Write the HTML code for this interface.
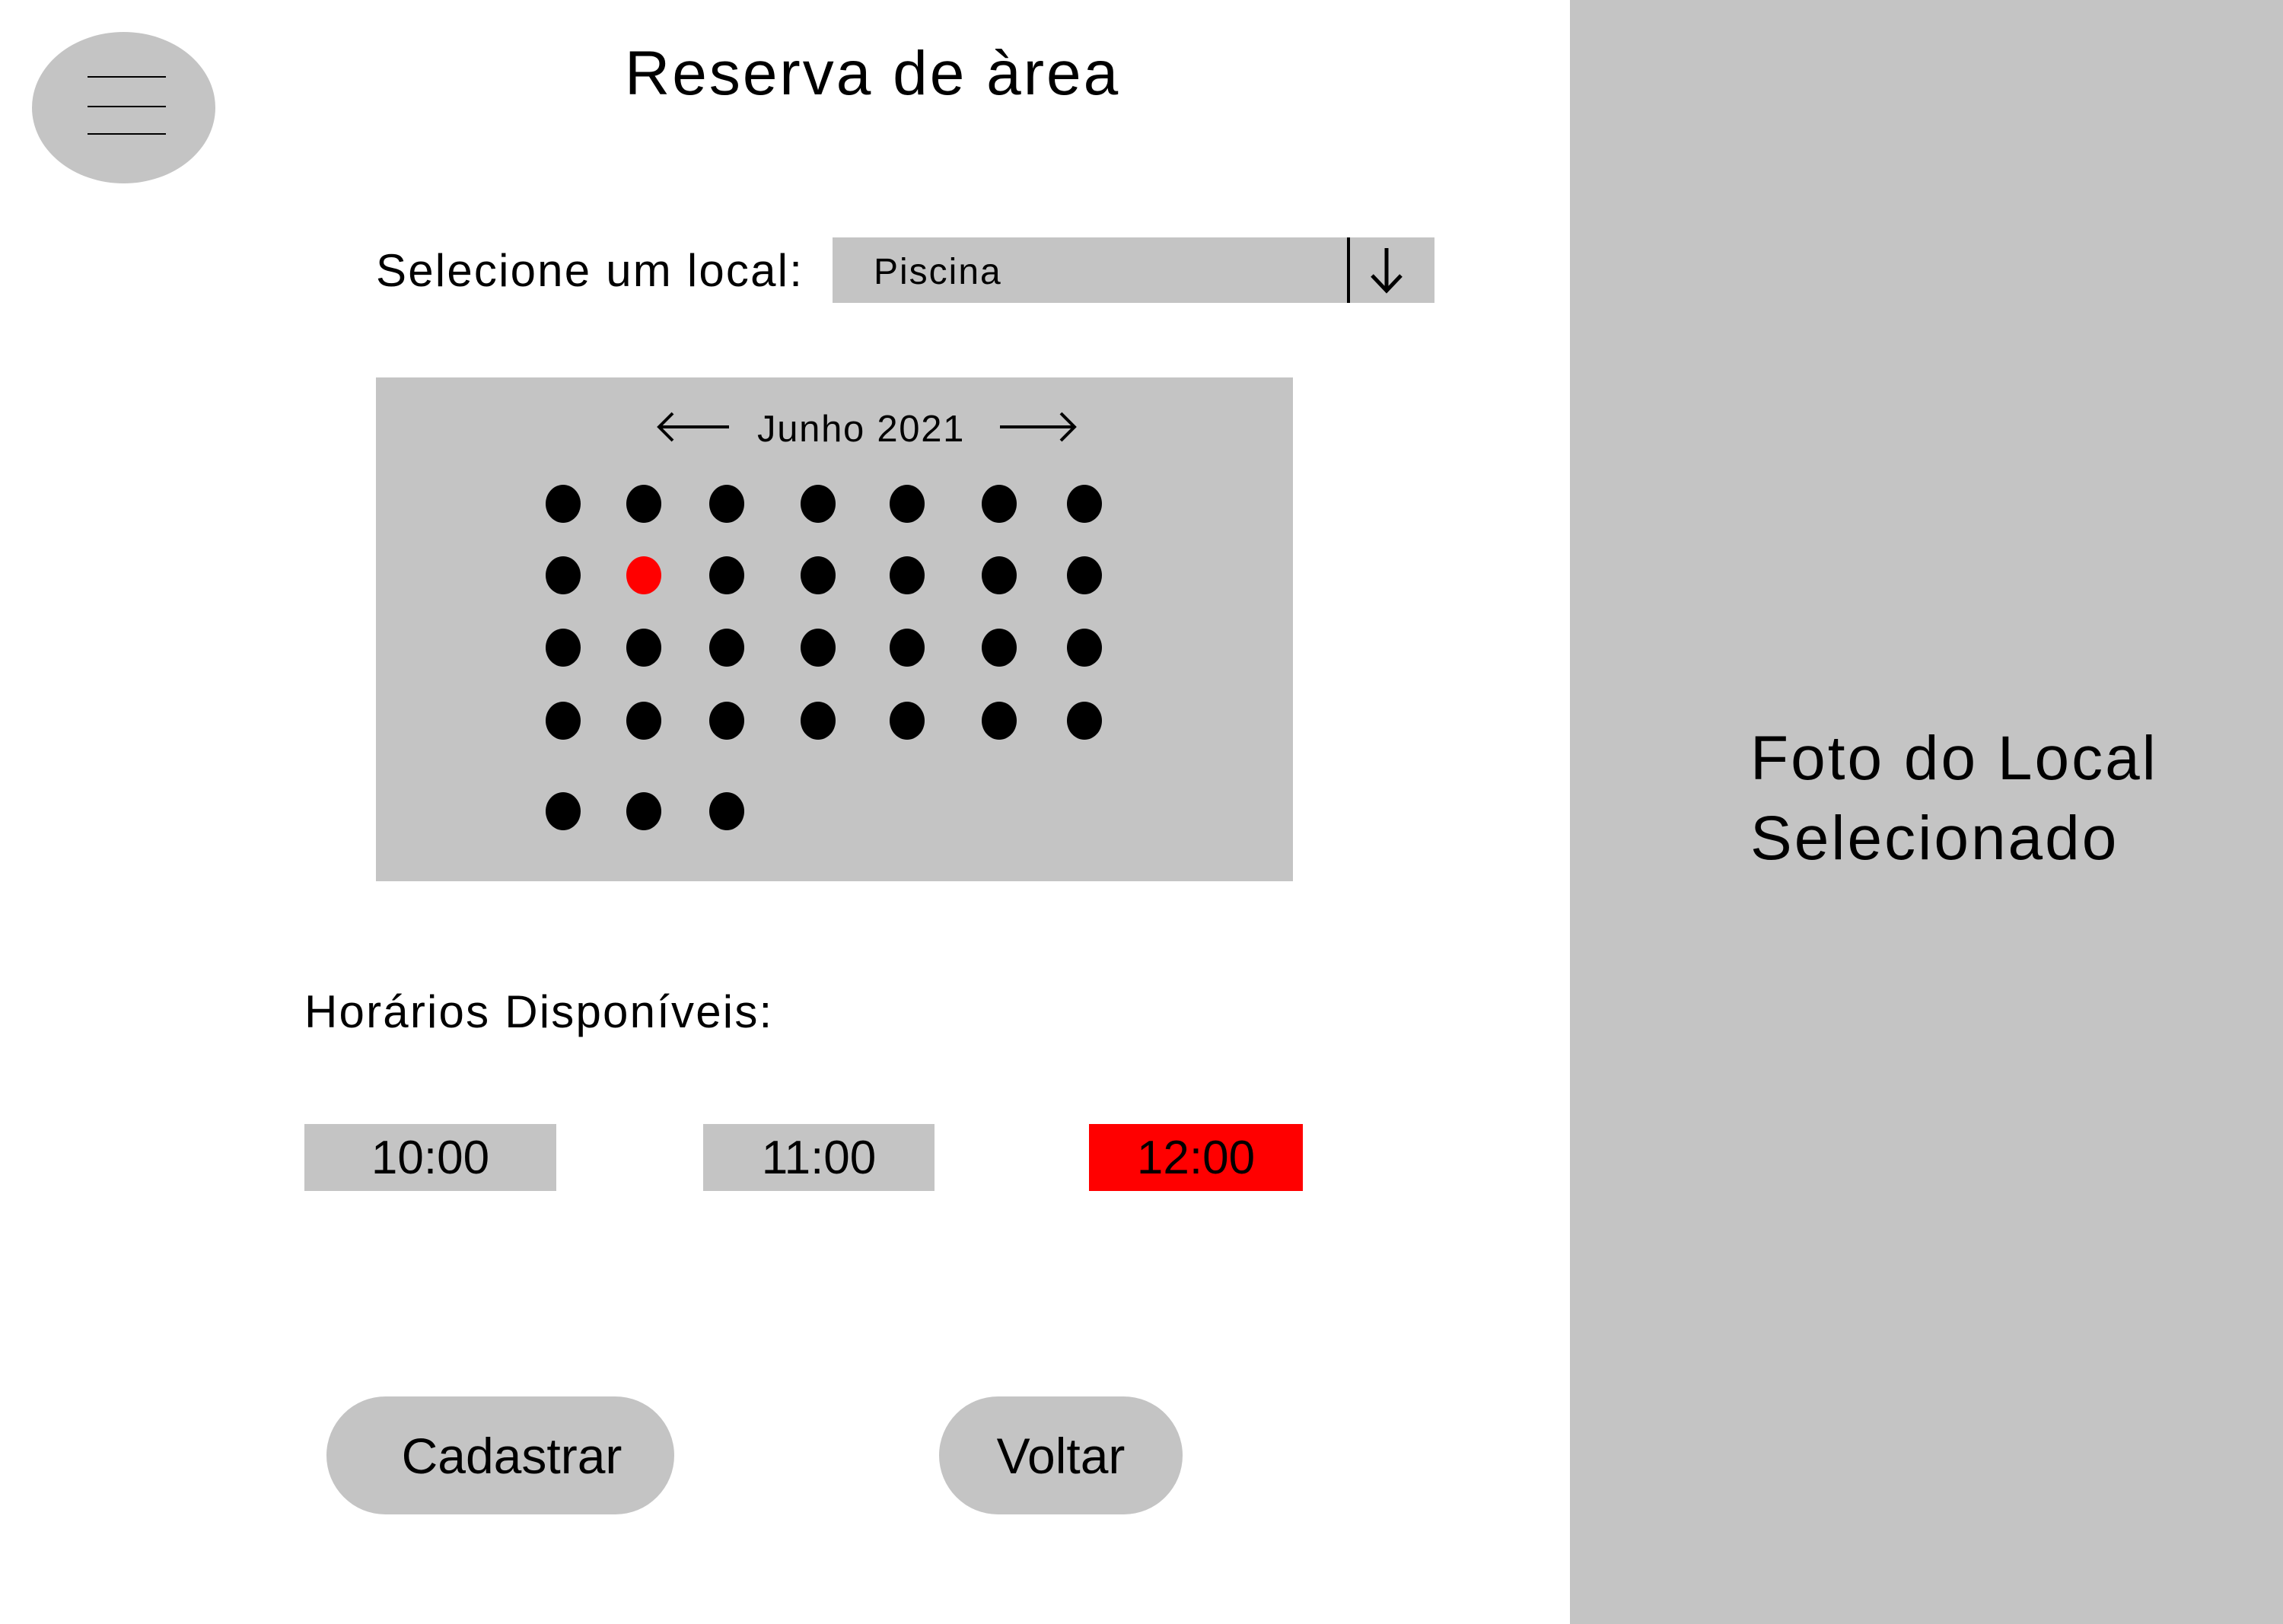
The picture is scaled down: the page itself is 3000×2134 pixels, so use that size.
<!DOCTYPE html>
<html><head><meta charset="utf-8"><style>
*{margin:0;padding:0;box-sizing:border-box}
body{width:3000px;height:2134px;background:#fff;position:relative;overflow:hidden;font-family:"Liberation Sans",sans-serif;color:#000}
.a{position:absolute}
.g{background:#c4c4c4}
.dot{position:absolute;width:46px;height:50px;border-radius:50%;background:#000}
.t{position:absolute;white-space:nowrap;line-height:1}
.btn{position:absolute;display:flex;align-items:center;justify-content:center;font-size:62px}
</style></head><body>
<div class="a g" style="left:2063px;top:0;width:937px;height:2134px"></div>
<div class="t" style="left:2300px;top:944px;font-size:82px;line-height:105px;white-space:normal;width:680px;letter-spacing:3px">Foto do Local Selecionado</div>

<div class="a g" style="left:42px;top:42px;width:241px;height:199px;border-radius:50%"></div>
<div class="a" style="left:115px;top:100px;width:103px;height:2px;background:#000"></div>
<div class="a" style="left:115px;top:139px;width:103px;height:2px;background:#000"></div>
<div class="a" style="left:115px;top:175px;width:103px;height:2px;background:#000"></div>

<div class="t" style="left:821px;top:56px;font-size:82px;letter-spacing:3px">Reserva de àrea</div>

<div class="t" style="left:494px;top:326px;font-size:60px;letter-spacing:2.2px">Selecione um local:</div>
<div class="a g" style="left:1094px;top:312px;width:791px;height:86px"></div>
<div class="t" style="left:1148px;top:334px;font-size:48px;letter-spacing:2px">Piscina</div>
<div class="a" style="left:1770px;top:312px;width:4px;height:86px;background:#000"></div>
<svg class="a" style="left:1795px;top:322px" width="54" height="66" viewBox="0 0 54 66"><path d="M27 4V60M8 40L27 60L46 40" stroke="#000" stroke-width="5" fill="none"/></svg>

<div class="a g" style="left:494px;top:496px;width:1205px;height:662px"></div>
<svg class="a" style="left:862px;top:540px" width="98" height="42" viewBox="0 0 98 42"><path d="M96 21H4M22 3L4 21L22 39" stroke="#000" stroke-width="4" fill="none"/></svg>
<div class="t" style="left:995px;top:540px;font-size:49px;letter-spacing:1.7px">Junho 2021</div>
<svg class="a" style="left:1312px;top:540px" width="104" height="42" viewBox="0 0 104 42"><path d="M2 21H100M82 3L100 21L82 39" stroke="#000" stroke-width="4" fill="none"/></svg>

<div id="dots"></div>

<div class="t" style="left:400px;top:1300px;font-size:60px;letter-spacing:2.2px">Horários Disponíveis:</div>
<div class="btn g" style="left:400px;top:1477px;width:331px;height:88px">10:00</div>
<div class="btn g" style="left:924px;top:1477px;width:304px;height:88px">11:00</div>
<div class="btn" style="left:1431px;top:1477px;width:281px;height:88px;background:#ff0000">12:00</div>

<div class="btn g" style="left:429px;top:1835px;width:457px;height:155px;border-radius:78px;font-size:66px;padding-left:30px">Cadastrar</div>
<div class="btn g" style="left:1234px;top:1835px;width:320px;height:155px;border-radius:78px;font-size:66px">Voltar</div>

<script>
var xs=[740,846,955,1075,1192,1313,1425],ys=[662,756,851,947,1066],h='';
for(var r=0;r<5;r++)for(var c=0;c<7;c++){if(r==4&&c>2)continue;
h+='<div class="dot" style="left:'+(xs[c]-23)+'px;top:'+(ys[r]-25)+'px;'+(r==1&&c==1?'background:#ff0000':'')+'"></div>';}
document.getElementById('dots').innerHTML=h;
</script>
</body></html>
